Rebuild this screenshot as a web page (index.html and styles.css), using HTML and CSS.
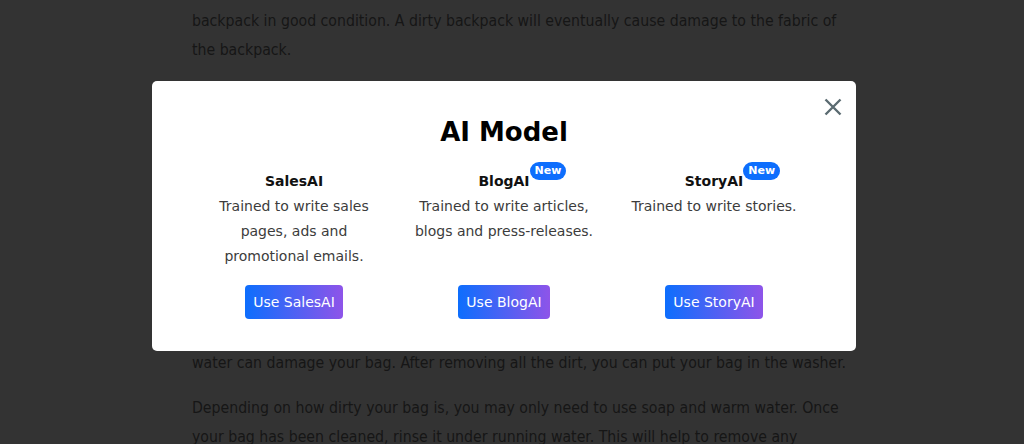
FILE: index.html
```html
<!DOCTYPE html>
<html lang="en">
<head>
<meta charset="utf-8">
<title>AI Model</title>
<link rel="stylesheet" href="styles.css">
</head>
<body>
<main class="article">
  <p>backpack in good condition. A dirty backpack will eventually cause damage to the fabric of<br>the backpack.</p>
  <p>Before washing, empty every pocket and shake out any crumbs, sand or loose dirt that has<br>collected at the bottom of the bag.</p>
  <h3 class="article-heading">How to wash your backpack</h3>
  <p>Start by brushing off the dirt with a soft brush. Check the care label first, as some<br>materials should never be machine washed. Use a gentle detergent and cold water,<br>because strong chemicals can fade the colour of the fabric. Remember to remove any<br>metal frames and detachable straps before washing, and close all the zippers so<br>they do not snag. Never use bleach, and avoid very hot water, since hot<br>water can damage your bag. After removing all the dirt, you can put your bag in the washer.</p>
  <p>Depending on how dirty your bag is, you may only need to use soap and warm water. Once<br>your bag has been cleaned, rinse it under running water. This will help to remove any</p>
</main>

<div class="overlay">
  <div class="modal" role="dialog" aria-labelledby="modal-title">
    <button class="close" aria-label="Close">
      <svg width="18" height="18" viewBox="0 0 18 18" aria-hidden="true"><path d="M1.5 1.5 L16.5 16.5 M16.5 1.5 L1.5 16.5" stroke="#5b6b71" stroke-width="2.4" stroke-linecap="butt" fill="none"/></svg>
    </button>
    <h2 class="modal-title" id="modal-title">AI Model</h2>
    <div class="models">
      <div class="model">
        <h4 class="model-name"><span class="name">SalesAI</span></h4>
        <p class="model-desc">Trained to write sales pages, ads and promotional emails.</p>
        <button class="use-btn">Use SalesAI</button>
      </div>
      <div class="model">
        <h4 class="model-name"><span class="name">BlogAI<span class="badge">New</span></span></h4>
        <p class="model-desc">Trained to write articles, blogs and press-releases.</p>
        <button class="use-btn">Use BlogAI</button>
      </div>
      <div class="model">
        <h4 class="model-name"><span class="name">StoryAI<span class="badge">New</span></span></h4>
        <p class="model-desc">Trained to write stories.</p>
        <button class="use-btn">Use StoryAI</button>
      </div>
    </div>
  </div>
</div>
</body>
</html>
```
FILE: styles.css
```css
html, body {
  margin: 0;
  padding: 0;
  height: 100%;
  overflow: hidden;
}

body {
  background: #ffffff;
  font-family: "DejaVu Sans Condensed", "DejaVu Sans", sans-serif;
  color: #707070;
}

.article {
  padding: 6px 0 0 192px;
  width: 670px;
  font-size: 15.7px;
  line-height: 29px;
}

.article p {
  margin: 0 0 16px;
  white-space: nowrap;
}

.article-heading {
  margin: 0 0 14px;
  font-size: 20px;
  line-height: 35px;
}

.overlay {
  position: fixed;
  inset: 0;
  background: rgba(0, 0, 0, 0.8);
  display: flex;
  align-items: flex-start;
  justify-content: flex-start;
  padding: 81px 0 0 152px;
}

.modal {
  position: relative;
  width: 704px;
  box-sizing: border-box;
  background: #ffffff;
  border-radius: 5px;
  padding: 36px 0 32px;
  font-family: "DejaVu Sans", Verdana, sans-serif;
  text-align: center;
}

.close {
  position: absolute;
  top: 17px;
  right: 14px;
  width: 18px;
  height: 18px;
  padding: 0;
  border: 0;
  background: transparent;
  display: flex;
  cursor: pointer;
}

.modal-title {
  margin: 0;
  font-size: 26px;
  line-height: 31px;
  font-weight: bold;
  color: #000000;
}

.models {
  display: grid;
  grid-template-columns: repeat(3, 210px);
  justify-content: center;
  margin-top: 21px;
}

.model {
  display: flex;
  flex-direction: column;
  align-items: center;
  padding: 0 12px;
}

.model-name {
  margin: 0;
  font-size: 14px;
  line-height: 25px;
  font-weight: bold;
  color: #111111;
}

.name {
  position: relative;
  display: inline-block;
}

.badge {
  position: absolute;
  left: 100%;
  top: -7px;
  padding: 3px 5px 4px;
  font-size: 11px;
  line-height: 11px;
  font-weight: bold;
  color: #ffffff;
  background: #0d6efd;
  border-radius: 10px;
  white-space: nowrap;
}

.model-desc {
  flex: 1;
  margin: 0;
  font-size: 14px;
  line-height: 25px;
  color: #3c3c3c;
}

.use-btn {
  margin-top: 16px;
  padding: 7px 8px;
  border: 0;
  border-radius: 4px;
  background: linear-gradient(to right, #0d6efd, #8e54e9);
  color: #ffffff;
  font-family: "DejaVu Sans", Verdana, sans-serif;
  font-size: 14px;
  line-height: 20px;
  cursor: pointer;
}
```
